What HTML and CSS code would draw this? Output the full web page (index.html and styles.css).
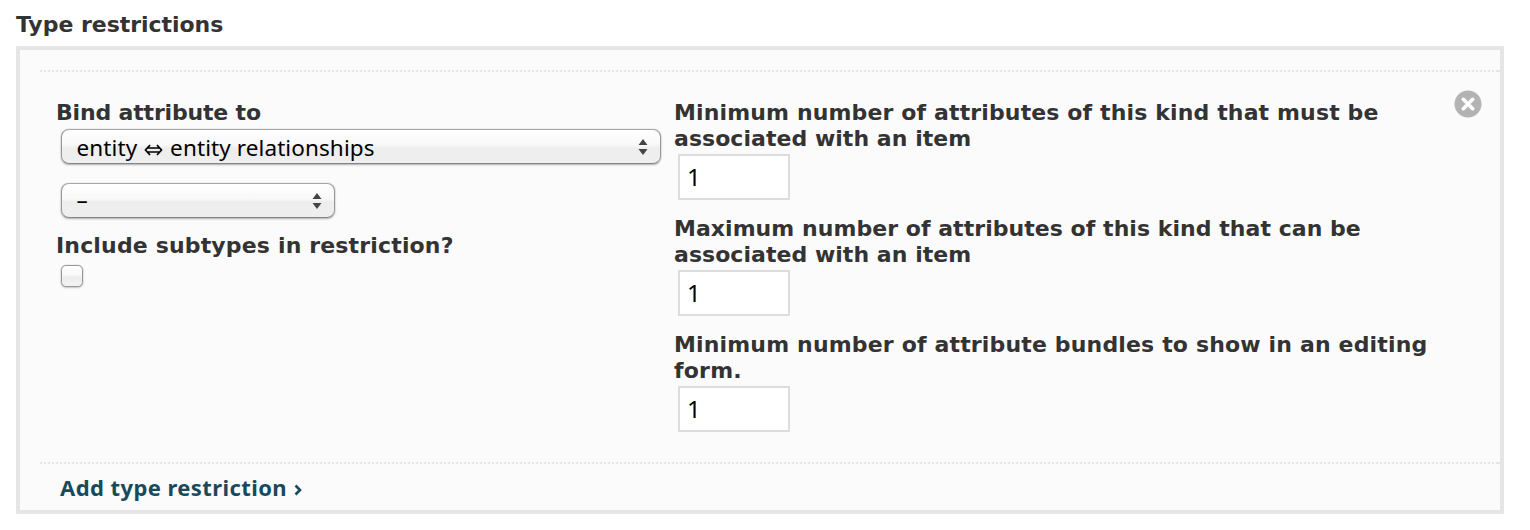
FILE: index.html
```html
<!DOCTYPE html>
<html lang="en">
<head>
<meta charset="utf-8">
<title>Type restrictions</title>
<link rel="stylesheet" href="styles.css">
</head>
<body>
<h2 class="label heading">Type restrictions</h2>
<section class="panel">
  <div class="item">
    <div class="left">
      <div class="label bind">Bind attribute to</div>
      <div class="select wide"><span class="value">entity <svg class="iff" viewBox="0 0 18 12"><path d="M5.500 1 1 6l4.500 5M12.500 1 17 6l-4.500 5M3 4h12M3 8h12"/></svg> entity relationships</span><svg class="arrows" viewBox="0 0 10 16"><path d="M5 0l4.500 6h-9zM5 16l4.500-6h-9z"/></svg></div>
      <div class="select short"><span class="value">–</span><svg class="arrows" viewBox="0 0 10 16"><path d="M5 0l4.500 6h-9zM5 16l4.500-6h-9z"/></svg></div>
      <div class="label include">Include subtypes in restriction?</div>
      <div class="checkbox"></div>
    </div>
    <div class="right">
      <div class="field"><div class="label"><span class="l1">Minimum number of attributes of this kind that must be</span><br><span class="l2">associated with an item</span></div><div class="input">1</div></div>
      <div class="field"><div class="label"><span class="l3">Maximum number of attributes of this kind that can be</span><br><span class="l2">associated with an item</span></div><div class="input">1</div></div>
      <div class="field"><div class="label"><span class="l4">Minimum number of attribute bundles to show in an editing</span><br><span class="l5">form.</span></div><div class="input">1</div></div>
    </div>
    <svg class="remove" viewBox="0 0 28 28"><circle cx="14" cy="14" r="13.500"/><path d="M9.300 9.300l9.400 9.400M18.700 9.300l-9.400 9.400"/></svg>
  </div>
  <div class="footer"><span class="add">Add type restriction</span><svg class="chev" viewBox="0 0 8 12"><path d="M1.500 1.500 6 6l-4.500 4.500"/></svg></div>
</section>
</body>
</html>
```
FILE: styles.css
```css
* { box-sizing: border-box; }
body { margin: 0; padding: 12px 26px 0 16px; background: #fff; color: #333; }
.label { margin: 0; font: bold 22px/26px "DejaVu Sans", sans-serif; white-space: nowrap; }
.heading { height: 34px; letter-spacing: -.03px; }
.bind { letter-spacing: -.17px; }
.l1 { letter-spacing: .135px; }
.l2, .l3 { letter-spacing: .045px; }
.l4 { letter-spacing: .16px; }
.l5 { letter-spacing: .2px; }
.panel { height: 468px; border: 4px solid #e5e5e5; background: #fbfbfb; padding: 20px 0 0 20px; }
.item, .footer {
  background:
    linear-gradient(#e5e5e5, #e5e5e5) 100% 0 / 4px 2px no-repeat,
    repeating-linear-gradient(90deg, #e5e5e5 0 2px, transparent 2px 4px) 0 0 / 100% 2px no-repeat;
}
.item { display: flex; height: 392px; padding-top: 30px; }
.left { width: 634px; padding-left: 16px; }
.select {
  display: flex; justify-content: space-between; align-items: center;
  height: 35px; margin-left: 4.500px; padding: 0 12px 0 14px;
  border: 1px solid #999; border-color: #a5a5a5 #999 #858585;
  border-radius: 8px;
  background: linear-gradient(#fff 0, #f8f8f8 45%, #ededed 55%, #efefef 100%);
  box-shadow: 0 0 1px #aaa, 0 1px 2px rgba(0,0,0,.3);
  font: 22.500px/30px "Noto Sans", sans-serif; color: #000;
}
.wide { width: 600px; margin-top: 3px; letter-spacing: .1px; }
.short { width: 274px; margin-top: 19px; }
.value { white-space: pre; position: relative; left: 1px; top: 1px; }
.short .value { top: -1px; }
.iff { width: 19px; height: 12px; margin: 0 1px; fill: none; stroke: #000; stroke-width: 1.700; }
.arrows { width: 10px; height: 16px; fill: #444; }
.include { margin-top: 15px; letter-spacing: .16px; }
.checkbox {
  width: 22px; height: 22px; margin: 6px 0 0 5px;
  border: 1px solid #999; border-radius: 5px;
  background: linear-gradient(#fff, #f8f8f8 45%, #ededed 55%, #f2f2f2);
  box-shadow: 0 0 1px #999, 0 1px 2px rgba(0,0,0,.2);
}
.right { width: 780px; }
.field { height: 116px; }
.input {
  width: 112px; height: 46px; margin: 2px 0 0 4px; padding-left: 7px;
  border: 2px solid #ddd; background: #fff; color: #000;
  font: 24px/42px "Noto Sans", sans-serif;
}
.remove { width: 28px; height: 28px; margin-top: -10px; fill: #b3b3b3; }
.remove path { stroke: #fff; stroke-width: 3.600; stroke-linecap: round; }
.footer { display: flex; align-items: center; height: 48px; padding: 2px 0 0 20px; }
.add { font: bold 22px/30px "Noto Sans", sans-serif; color: #174a5b; letter-spacing: .42px; }
.chev { width: 8px; height: 12px; margin: 5px 0 0 7px; fill: none; stroke: #174a5b; stroke-width: 2.600; }
```
